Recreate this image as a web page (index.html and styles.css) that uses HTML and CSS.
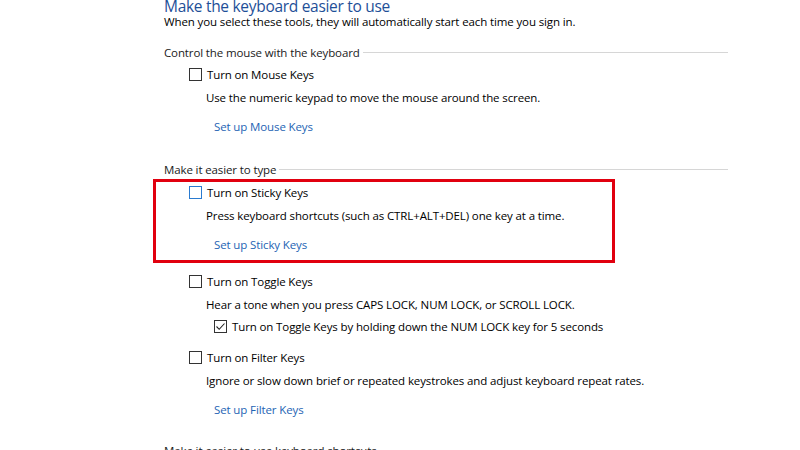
FILE: index.html
```html
<!DOCTYPE html>
<html>
<head>
<meta charset="utf-8">
<link rel="stylesheet" href="styles.css">
</head>
<body>
<div class="page">
  <h1 class="title">Make the keyboard easier to use</h1>
  <p class="sub">When you select these tools, they will automatically start each time you sign in.</p>

  <div class="group-head g1"><span>Control the mouse with the keyboard</span><i class="rule"></i></div>
  <label class="opt o-first"><span class="box"></span>Turn on Mouse Keys</label>
  <p class="desc">Use the numeric keypad to move the mouse around the screen.</p>
  <a class="link">Set up Mouse Keys</a>

  <div class="group-head g2"><span>Make it easier to type</span><i class="rule"></i></div>
  <div class="highlight">
    <label class="opt o-sticky"><span class="box hover"></span>Turn on Sticky Keys</label>
    <p class="desc">Press keyboard shortcuts (such as CTRL+ALT+DEL) one key at a time.</p>
    <a class="link">Set up Sticky Keys</a>
  </div>

  <label class="opt o-toggle"><span class="box"></span>Turn on Toggle Keys</label>
  <p class="desc">Hear a tone when you press CAPS LOCK, NUM LOCK, or SCROLL LOCK.</p>
  <label class="opt sub-opt"><span class="box checked"><svg viewBox="0 0 13 13" width="13" height="13"><path d="M2.5 6.5 L5.2 9.3 L10.5 3.5" fill="none" stroke="#222" stroke-width="1.1"/></svg></span>Turn on Toggle Keys by holding down the NUM LOCK key for 5 seconds</label>

  <label class="opt o-filter"><span class="box"></span>Turn on Filter Keys</label>
  <p class="desc">Ignore or slow down brief or repeated keystrokes and adjust keyboard repeat rates.</p>
  <a class="link">Set up Filter Keys</a>

  <div class="group-head g3"><span>Make it easier to use keyboard shortcuts</span><i class="rule"></i></div>
</div>
</body>
</html>
```

FILE: styles.css
```css
html, body {
  margin: 0;
  padding: 0;
  background: #ffffff;
  overflow: hidden;
}
body {
  font-family: "Open Sans", "Noto Sans", "DejaVu Sans", sans-serif;
  font-size: 11.5px;
  letter-spacing: -0.12px;
  color: #000;
}
.page {
  width: 564px;
  padding-left: 164px;
}
.title {
  margin: -2px 0 0;
  font-size: 15.5px;
  letter-spacing: -0.3px;
  font-weight: normal;
  line-height: 17px;
  color: #1e4f98;
}
.sub {
  margin: 0;
  line-height: 13px;
}
.group-head {
  display: flex;
  align-items: center;
  height: 16px;
  color: #1a1a1a;
}
.group-head .rule {
  flex: 1;
  height: 0;
  border-top: 1px solid #d6d6d6;
  margin-left: 3px;
}
.g1 { margin-top: 16px; }
.g2 { margin-top: 26px; }
.g3 { margin-top: 24px; }

.opt {
  display: flex;
  align-items: center;
  height: 16px;
  margin-left: 25px;
}
.box {
  width: 11px;
  height: 11px;
  border: 1px solid #333;
  background: #fff;
  margin-right: 5px;
  flex: none;
  position: relative;
}
.box.hover { border-color: #2a7bd0; }
.box svg {
  position: absolute;
  left: -1px;
  top: -1px;
}
.o-first { margin-top: 6px; }
.o-sticky { margin-top: 2px; }
.o-toggle { margin-top: 10px; }
.o-filter { margin-top: 15px; }
.sub-opt { margin-left: 50px; margin-top: 5px; }

.desc {
  margin: 8px 0 0 42px;
  line-height: 16px;
}
.link {
  display: block;
  margin: 13px 0 0 50px;
  line-height: 16px;
  color: #1e64b4;
}
.highlight {
  width: 448px;
  margin: 2px 0 0 -11px;
  padding: 0 0 7px 8px;
  border: 3px solid #e1000f;
}
```
